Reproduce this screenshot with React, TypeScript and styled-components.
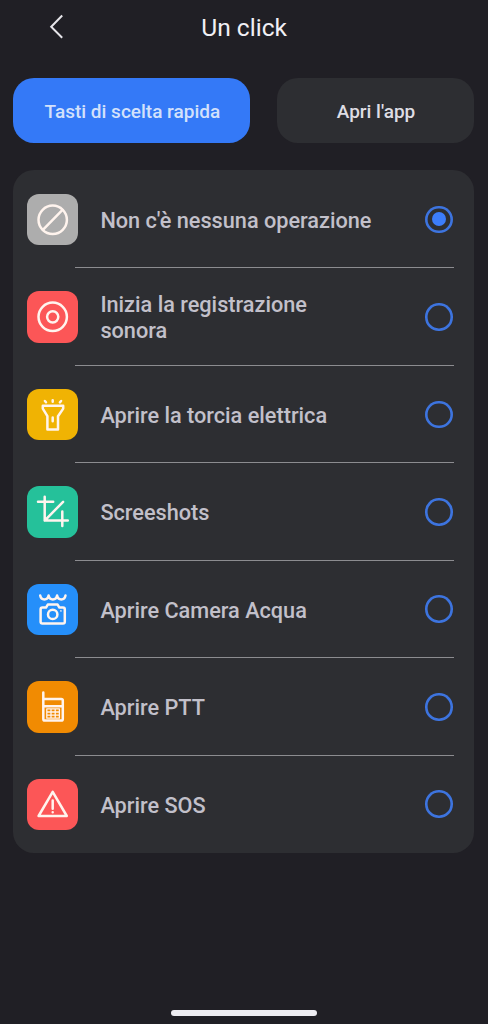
import React, { useState } from "react";
import styled, { createGlobalStyle } from "styled-components";

const GlobalStyle = createGlobalStyle`
  *, *::before, *::after { box-sizing: border-box; }
  body { margin: 0; background: #201f25; }
`;

const Screen = styled.main`
  display: flex;
  flex-direction: column;
  width: 100%;
  height: 1024px;
  padding: 0 14px 8px 13.4px;
  background: #201f25;
  font-family: Roboto, "Liberation Sans", sans-serif;
`;

const Header = styled.header`
  display: grid;
  grid-template-columns: 100px 1fr 100px;
  align-items: center;
  height: 56px;
`;

const BackButton = styled.button`
  display: flex;
  width: 26px;
  height: 26px;
  margin: -4px 0 0 30.6px;
  padding: 0;
  border: 0;
  background: none;
`;

const Title = styled.h1`
  margin: 0;
  padding-left: 0.8px;
  color: #f1f0f5;
  font-size: 24.6px;
  font-weight: 400;
  line-height: 56px;
  text-align: center;
`;

const Tabs = styled.nav`
  display: grid;
  grid-template-columns: 237px 197px;
  justify-content: space-between;
  margin-top: 22px;
`;

const Tab = styled.button<{ $active: boolean }>`
  height: 65px;
  padding: 1px 0 0 1px;
  border: 0;
  border-radius: 21px;
  background: ${({ $active }) => ($active ? "#3479f7" : "#2d2e32")};
  color: ${({ $active }) => ($active ? "#d3e1fb" : "#dedde4")};
  font-family: inherit;
  font-size: 19px;
  font-weight: 500;
`;

const Card = styled.ul`
  display: grid;
  grid-template-rows: repeat(7, 1fr);
  height: 683px;
  margin: 27px 0 0;
  padding: 0.6px 20px 0 13.6px;
  border-radius: 21px;
  background: #2d2e32;
  list-style: none;
`;

const Row = styled.li`
  display: grid;
  grid-template-columns: 47.8px 1fr;
  grid-template-rows: 1fr 1px;
  &:last-child > hr { visibility: hidden; }
`;

const RowContent = styled.div`
  grid-column: 1 / -1;
  display: flex;
  align-items: center;
  padding-top: 1px;
`;

const Divider = styled.hr`
  grid-column: 2;
  width: 100%;
  height: 1px;
  margin: 0;
  border: 0;
  background: #8c8c90;
`;

const Tile = styled.span<{ $color: string }>`
  flex: none;
  width: 51.5px;
  height: 51.5px;
  border-radius: 12px;
  background: ${({ $color }) => $color};
`;

const Glyph = styled.svg`
  display: block;
  width: 100%;
  height: 100%;
  fill: none;
  stroke: #fff4ee;
  stroke-width: 2.5;
  stroke-linecap: round;
  stroke-linejoin: round;

  .fine { stroke-width: 1.3; }
`;

const Label = styled.span`
  width: 276px;
  margin: 2px 0 0 21.9px;
  color: #c2c0ca;
  font-size: 21.7px;
  font-weight: 500;
  line-height: 25.5px;
  white-space: pre-line;
`;

const Radio = styled.button<{ $checked: boolean }>`
  display: grid;
  place-items: center;
  width: 27.6px;
  height: 27.6px;
  margin-left: auto;
  margin-right: 1.3px;
  padding: 0;
  border: 0;
  border-radius: 50%;
  background: none;
  box-shadow: inset 0 0 0 2.6px #3d74df;
  &::after {
    content: "";
    width: 14px;
    height: 14px;
    border-radius: 50%;
    background: ${({ $checked }) => ($checked ? "#3c7dfb" : "transparent")};
  }
`;

const HomeBar = styled.div`
  width: 146px;
  height: 6px;
  margin: auto auto 0;
  border-radius: 3px;
  background: #eeedf2;
`;

const options = [
  {
    label: "Non c'è nessuna operazione",
    color: "#adadad",
    glyph: <><circle cx="25.7" cy="25.8" r="14.2" /><path d="M15.9 35.8 35.5 15.8" /></>,
  },
  {
    label: "Inizia la registrazione\nsonora",
    color: "#fc5657",
    glyph: <><circle cx="25.7" cy="25.8" r="14.2" /><circle cx="25.7" cy="25.8" r="5.6" /></>,
  },
  {
    label: "Aprire la torcia elettrica",
    color: "#f0b303",
    glyph: (
      <path d="M15.8 16.8H36.2V19.6L31 27.2V40.4H20.4V27.2L15.8 19.6ZM25.7 28.4V32.2M25.7 11.3V12.8M17.9 12 19 13.3M34.1 12 32.9 13.3" />
    ),
  },
  {
    label: "Screeshots",
    color: "#25c19a",
    glyph: <path d="M11 15.8H26.2M17.7 10.8V34.6H40.8M35.3 25.4V40M17.7 34.6 36.1 15.8" />,
  },
  {
    label: "Aprire Camera Acqua",
    color: "#258ffa",
    glyph: (
      <>
        <path d="M13.2 11.6C14.2 16.8 20.6 16.8 21.6 11.6C22.6 16.8 29.1 16.8 30.1 11.6C31.1 16.8 37.5 16.8 38.5 11.6" />
        <path d="M15.4 23.6H19L20.8 20.6H30.6L32.4 23.6H36Q37.8 23.6 37.8 25.4V37.7Q37.8 39.5 36 39.5H15.4Q13.6 39.5 13.6 37.7V25.4Q13.6 23.6 15.4 23.6Z" />
        <circle cx="25.7" cy="30.4" r="4.7" />
        <path className="fine" d="M33.6 26.9H34.2" />
      </>
    ),
  },
  {
    label: "Aprire PTT",
    color: "#f18b02",
    glyph: (
      <>
        <path d="M16.3 11.4V38Q16.3 39.6 17.9 39.6H34.2Q35.8 39.6 35.8 38V19.6Q35.8 18 34.2 18H16.3M16.3 25.2H35.8" />
        <path
          className="fine"
          d="M19.8 27.9H32.4V37.2H19.8ZM19.8 31H32.4M19.8 34.1H32.4M24 27.9V37.2M28.2 27.9V37.2"
        />
      </>
    ),
  },
  {
    label: "Aprire SOS",
    color: "#fc5657",
    glyph: <path d="M25.7 12.8 39.8 37H11.6ZM25.7 21.4V29.8M25.7 33.2V33.3" />,
  },
];

export default function App() {
  const [selected, setSelected] = useState(0);
  const [tab, setTab] = useState(0);

  return (
    <>
      <GlobalStyle />
      <Screen>
        <Header>
          <BackButton aria-label="Indietro">
            <svg width="26" height="26" viewBox="0 0 26 26" fill="none" stroke="#e6e5ea" strokeWidth="2">
              <path d="M18.2 2.5 7.2 13.7 18.2 24.7" />
            </svg>
          </BackButton>
          <Title>Un click</Title>
        </Header>
        <Tabs>
          {["Tasti di scelta rapida", "Apri l'app"].map((name, i) => (
            <Tab key={name} $active={tab === i} onClick={() => setTab(i)}>
              {name}
            </Tab>
          ))}
        </Tabs>
        <Card>
          {options.map(({ label, color, glyph }, i) => (
            <Row key={label}>
              <RowContent>
                <Tile $color={color}>
                  <Glyph viewBox="0 0 51.5 51.5">{glyph}</Glyph>
                </Tile>
                <Label>{label}</Label>
                <Radio
                  role="radio"
                  aria-checked={selected === i}
                  aria-label={label}
                  $checked={selected === i}
                  onClick={() => setSelected(i)}
                />
              </RowContent>
              <Divider />
            </Row>
          ))}
        </Card>
        <HomeBar />
      </Screen>
    </>
  );
}
